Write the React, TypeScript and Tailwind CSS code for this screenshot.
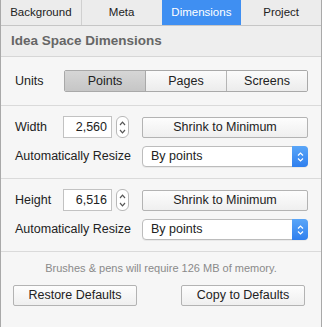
import React from "react";

function Stepper() {
  return (
    <div className="w-[13px] h-[22px] ml-[4px] rounded-[6px] border border-[#b8b8b8] bg-white flex flex-col items-center justify-center gap-[3px]">
      <svg width="7" height="5" viewBox="0 0 7 5"><path d="M1 4 L3.5 1.2 L6 4" fill="none" stroke="#555" strokeWidth="1.2" /></svg>
      <svg width="7" height="5" viewBox="0 0 7 5"><path d="M1 1 L3.5 3.8 L6 1" fill="none" stroke="#555" strokeWidth="1.2" /></svg>
    </div>
  );
}

function Select() {
  return (
    <div className="w-[166px] h-[21px] rounded-[4px] border border-[#bcbcbc] bg-white flex items-center shadow-[0_1px_0_rgba(0,0,0,0.05)]">
      <span className="flex-1 pl-[8px] text-[12.5px] text-[#222]">By points</span>
      <div className="w-[16px] h-[21px] -mr-px -my-px rounded-r-[4px] bg-gradient-to-b from-[#5aa6f8] to-[#2f7fee] flex flex-col items-center justify-center gap-[2px]">
        <svg width="7" height="4" viewBox="0 0 7 4"><path d="M1 3.5 L3.5 1 L6 3.5" fill="none" stroke="#fff" strokeWidth="1.2" /></svg>
        <svg width="7" height="4" viewBox="0 0 7 4"><path d="M1 0.5 L3.5 3 L6 0.5" fill="none" stroke="#fff" strokeWidth="1.2" /></svg>
      </div>
    </div>
  );
}

function Btn({ children, w }: { children: React.ReactNode; w: string }) {
  return (
    <div className={`${w} h-[21px] border border-[#b3b3b3] rounded-[2px] bg-gradient-to-b from-[#fdfdfd] to-[#efefef] flex items-center justify-center text-[12.5px] text-[#222]`}>
      {children}
    </div>
  );
}

function DimSection({ label, value }: { label: string; value: string }) {
  return (
    <div className="flex flex-col gap-[8px] pt-[10px] pb-[11px] pl-[14px] border-b border-[#dadada]">
      <div className="flex items-center h-[22px]">
        <span className="w-[48px] text-[12.5px] text-[#222]">{label}</span>
        <div className="w-[49px] h-[22px] border border-[#c2c2c2] bg-white flex items-center justify-end pr-[4px] text-[12.5px] text-[#222]">{value}</div>
        <Stepper />
        <div className="ml-[13px]">
          <Btn w="w-[166px]">Shrink to Minimum</Btn>
        </div>
      </div>
      <div className="flex items-center h-[21px]">
        <span className="w-[127px] text-[12.5px] text-[#222]">Automatically Resize</span>
        <Select />
      </div>
    </div>
  );
}

export default function App() {
  const tabs = ["Background", "Meta", "Dimensions", "Project"];
  return (
    <div className="w-[322px] h-[327px] border-x border-[#a9a9a9] bg-[#f6f6f6] flex flex-col" style={{ fontFamily: '"Liberation Sans", Arial, sans-serif' }}>
      <div className="flex h-[26px] border-b border-[#c6c6c6] bg-[#ececec]">
        {tabs.map((t, i) => (
          <div
            key={t}
            className={
              t === "Dimensions"
                ? "flex-1 flex items-center justify-center text-[11.5px] text-white bg-[#3f8ff2]"
                : `flex-1 flex items-center justify-center text-[11.5px] text-[#222] ${i < 3 && tabs[i + 1] !== "Dimensions" ? "border-r border-[#d0d0d0]" : ""}`
            }
          >
            {t}
          </div>
        ))}
      </div>
      <div className="h-[31px] bg-[#eeeeee] border-b border-[#d6d6d6] flex items-center px-[10px] text-[13.5px] font-bold text-[#666]">
        Idea Space Dimensions
      </div>
      <div className="h-[49px] flex items-center pl-[14px] border-b border-[#dadada]">
        <span className="w-[49px] text-[12.5px] text-[#222]">Units</span>
        <div className="flex h-[22px] border border-[#a9a9a9] rounded-[2px] overflow-hidden">
          <div className="w-[81px] flex items-center justify-center text-[12.5px] text-[#222] bg-gradient-to-b from-[#d6d6d6] to-[#c6c6c6] border-r border-[#a9a9a9]">Points</div>
          <div className="w-[81px] flex items-center justify-center text-[12.5px] text-[#222] bg-gradient-to-b from-[#fbfbfb] to-[#ececec] border-r border-[#b5b5b5]">Pages</div>
          <div className="w-[80px] flex items-center justify-center text-[12.5px] text-[#222] bg-gradient-to-b from-[#fbfbfb] to-[#ececec]">Screens</div>
        </div>
      </div>
      <DimSection label="Width" value="2,560" />
      <DimSection label="Height" value="6,516" />
      <div className="flex flex-col items-center pt-[9px]">
        <div className="text-[11px] text-[#8a8a8a] h-[14px] leading-[14px]">Brushes &amp; pens will require 126 MB of memory.</div>
      </div>
      <div className="flex gap-[44px] pl-[12px] mt-[10px]">
        <Btn w="w-[124px]">Restore Defaults</Btn>
        <Btn w="w-[124px]">Copy to Defaults</Btn>
      </div>
    </div>
  );
}
